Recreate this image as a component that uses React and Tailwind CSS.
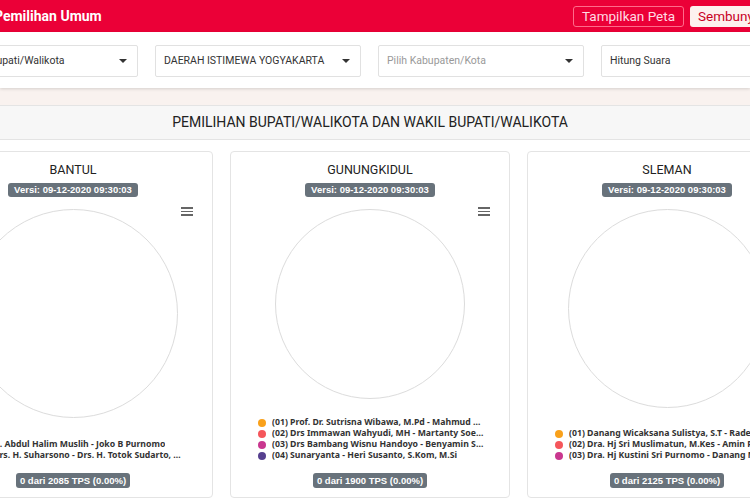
import React from 'react';

const SELECTS = [
  { label: 'Pemilihan Bupati/Walikota', arrow: true },
  { label: 'DAERAH ISTIMEWA YOGYAKARTA', arrow: true },
  { label: 'Pilih Kabupaten/Kota', arrow: true, placeholder: true },
  { label: 'Hitung Suara', arrow: true },
];

const CARDS = [
  {
    name: 'BANTUL',
    size: 'w-[209px] h-[209px]',
    tps: '0 dari 2085 TPS (0.00%)',
    legend: [
      { c: 'bg-[#f9a11b]', t: '(01) H. Abdul Halim Muslih - Joko B Purnomo' },
      { c: 'bg-[#f5565b]', t: '(02) Drs. H. Suharsono - Drs. H. Totok Sudarto, M.Si' },
    ],
  },
  {
    name: 'GUNUNGKIDUL',
    size: 'w-[190px] h-[190px]',
    tps: '0 dari 1900 TPS (0.00%)',
    legend: [
      { c: 'bg-[#f9a11b]', t: '(01) Prof. Dr. Sutrisna Wibawa, M.Pd - Mahmud Ardi Widanta' },
      { c: 'bg-[#f5565b]', t: '(02) Drs Immawan Wahyudi, MH - Martanty Soenar Dina' },
      { c: 'bg-[#c9378f]', t: '(03) Drs Bambang Wisnu Handoyo - Benyamin Sudarmadi' },
      { c: 'bg-[#56408f]', t: '(04) Sunaryanta - Heri Susanto, S.Kom, M.Si' },
    ],
  },
  {
    name: 'SLEMAN',
    size: 'w-[199px] h-[199px]',
    tps: '0 dari 2125 TPS (0.00%)',
    legend: [
      { c: 'bg-[#f9a11b]', t: '(01) Danang Wicaksana Sulistya, S.T - Raden Agus Choliq' },
      { c: 'bg-[#f5565b]', t: '(02) Dra. Hj Sri Muslimatun, M.Kes - Amin Purnama' },
      { c: 'bg-[#c9378f]', t: '(03) Dra. Hj Kustini Sri Purnomo - Danang Maharsa' },
    ],
  },
];

function Caret() {
  return <span className="w-0 h-0 shrink-0 border-l-[4px] border-r-[4px] border-t-[4px] border-l-transparent border-r-transparent border-t-[#333]" />;
}

function Card({ card }) {
  return (
    <div className="w-[280px] h-[347px] shrink-0 border border-[#e4e4e4] rounded-[4px] bg-white flex flex-col items-center">
      <div className="mt-[10px] text-[12.5px] leading-[16px] text-[#222] font-['Roboto',sans-serif]">{card.name}</div>
      <div className="mt-[5px] h-[14px] px-[6px] rounded-[3px] bg-[#68727b] text-white text-[9.5px] leading-[14px] font-bold font-['Liberation_Sans',sans-serif]">
        Versi: 09-12-2020 09:30:03
      </div>
      <div className="relative w-full flex justify-center pt-[12px]">
        <div className={`${card.size} rounded-full border border-[#dcdcdc]`} />
        <div className="absolute top-[10px] right-[19px] w-[12px] flex flex-col gap-[2px]">
          <span className="h-[1.5px] bg-[#666]" />
          <span className="h-[1.5px] bg-[#666]" />
          <span className="h-[1.5px] bg-[#666]" />
        </div>
      </div>
      <div className="mt-auto self-start ml-[27px] w-[226px] font-['Noto_Sans',sans-serif] text-[8.7px] font-bold text-[#333]">
        {card.legend.map((l, i) => (
          <div key={i} className="h-[11px] flex items-center gap-[6px]">
            <span className={`w-[8px] h-[8px] rounded-full shrink-0 ${l.c}`} />
            <span className="truncate leading-[11px]">{l.t}</span>
          </div>
        ))}
      </div>
      <div className="mt-[12px] mb-[9px] h-[15px] px-[4px] rounded-[3px] bg-[#68727b] text-white text-[9.5px] leading-[15px] font-bold font-['Liberation_Sans',sans-serif]">
        {card.tps}
      </div>
    </div>
  );
}

export default function App() {
  return (
    <div className="w-[750px] h-[500px] overflow-hidden bg-white relative">
      {/* header */}
      <div className="h-[32px] bg-[#eb0037] flex items-center font-['Roboto',sans-serif]">
        <div className="w-[579px] shrink-0 -ml-[6px] text-white font-bold text-[14px] whitespace-nowrap">Pemilihan Umum</div>
        <div className="flex gap-[6px] shrink-0">
          <div className="h-[21px] px-[8px] border border-[#ff6b8a] rounded-[3px] text-[#ffdbe3] text-[13.5px] leading-[19px] whitespace-nowrap">Tampilkan Peta</div>
          <div className="h-[21px] px-[8px] bg-[#fdf1ef] rounded-[3px] text-[#c8001f] text-[13.5px] leading-[21px] whitespace-nowrap">Sembunyikan Filter</div>
        </div>
      </div>

      {/* filters */}
      <div className="h-[56px] bg-white shadow-[0_1px_3px_rgba(0,0,0,0.15)] relative z-10 pt-[13px]">
        <div className="flex gap-[17px] -ml-[68px] font-['Roboto',sans-serif]">
          {SELECTS.map((s, i) => (
            <div key={i} className="w-[206px] h-[32px] shrink-0 border border-[#e1e1e1] rounded-[2px] pl-[8px] pr-[10px] flex items-center justify-between text-[10.5px]">
              <span className={`whitespace-nowrap ${s.placeholder ? 'text-[#999]' : 'text-[#333]'}`}>{s.label}</span>
              {s.arrow && <Caret />}
            </div>
          ))}
        </div>
      </div>

      <div className="h-[17px] bg-[#f9f2ef]" />

      {/* section title */}
      <div className="h-[35px] bg-[#f7f7f7] border-y border-[#e4e4e4] flex items-center justify-center pr-[10px]">
        <span className="text-[14px] text-[#222] font-['Roboto',sans-serif] whitespace-nowrap">PEMILIHAN BUPATI/WALIKOTA DAN WAKIL BUPATI/WALIKOTA</span>
      </div>

      {/* cards */}
      <div className="pt-[11px] flex gap-[17px] -ml-[67px]">
        {CARDS.map((c) => (
          <Card key={c.name} card={c} />
        ))}
      </div>
    </div>
  );
}
